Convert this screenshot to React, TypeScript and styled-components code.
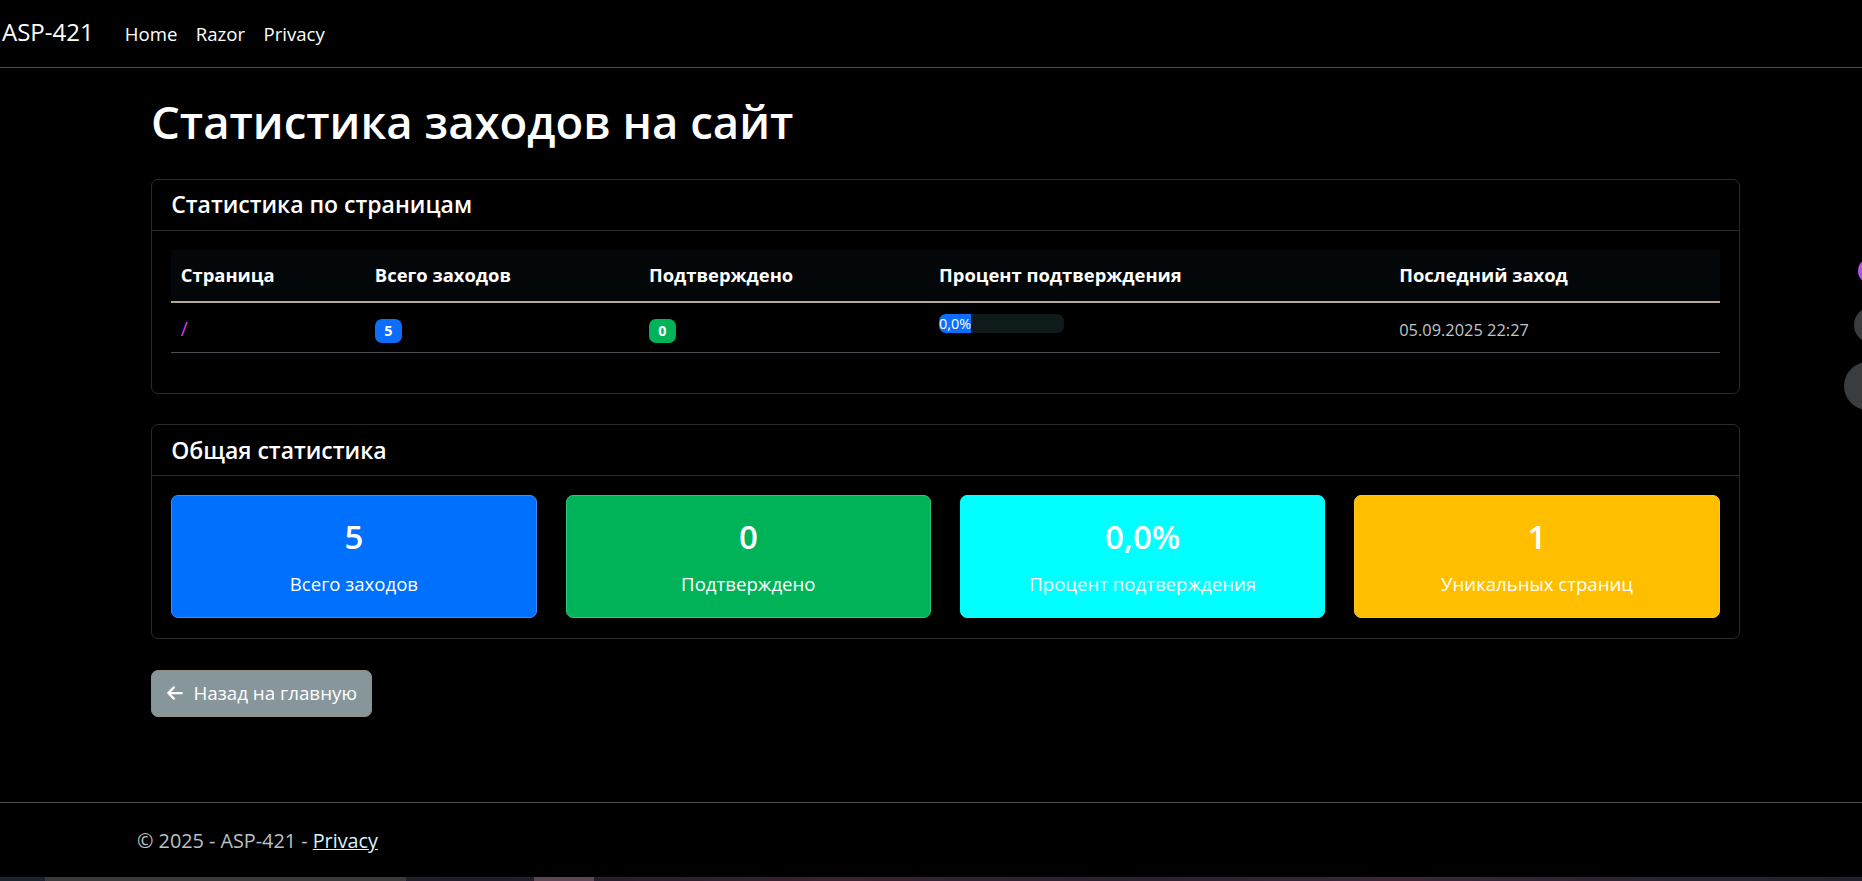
import styled, { createGlobalStyle } from 'styled-components';

const GlobalStyle = createGlobalStyle`
	html, body {
		margin: 0;
		padding: 0;
		background: #000;
	}
	body {
		color: #dee2e6;
		font-family: 'Open Sans', 'Noto Sans', sans-serif;
		font-size: 19.2px;
		line-height: 1.5;
	}
	* {
		box-sizing: border-box;
	}
`;

const Page = styled.div`
	min-height: 100vh;
	display: flex;
	flex-direction: column;
	position: relative;
	overflow: hidden;
`;

const Navbar = styled.nav`
	height: 68px;
	display: flex;
	align-items: center;
	padding: 0 0 1px 2px;
	border-bottom: 1px solid #4a5159;
`;

const Brand = styled.a`
	color: #fff;
	font-size: 24px;
	line-height: 1.2;
	text-decoration: none;
	margin-top: -2px;
`;

const NavList = styled.ul`
	display: flex;
	list-style: none;
	margin: 0 0 0 22px;
	padding: 0;
`;

const NavLink = styled.a`
	display: block;
	color: #fff;
	text-decoration: none;
	padding: 0 9.2px;
	font-size: 18.6px;
	line-height: 28.8px;
	margin-top: 2px;
`;

const Main = styled.main`
	flex: 1;
	padding-left: 151px;
	width: 1740px;
`;

const Title = styled.h1`
	margin: 25px 0 28px;
	font-size: 45.5px;
	font-weight: 600;
	line-height: 57.6px;
	color: #fff;
`;

const Card = styled.section<{ $gap?: number }>`
	border: 1px solid #2b2b2b;
	border-radius: 7px;
	margin-bottom: ${(p) => p.$gap ?? 0}px;
`;

const CardHeader = styled.header`
	padding: 10.8px 19.2px;
	border-bottom: 1px solid #2b2b2b;
`;

const CardTitle = styled.h5`
	margin: 0;
	font-size: 23px;
	font-weight: 600;
	line-height: 28.8px;
	color: #fff;
`;

const CardBody = styled.div`
	padding: 19.2px;
`;

const Table = styled.table`
	width: 100%;
	border-collapse: collapse;
	margin-bottom: 20.6px;
`;

const Th = styled.th<{ $w: number }>`
	width: ${(p) => p.$w}px;
	text-align: left;
	font-weight: 700;
	color: #fff;
	font-size: 18.4px;
	background: #03070a;
	padding: 11px 9.6px 11px;
	line-height: 28.8px;
	border-bottom: 2px solid #b5a897;
`;

const Td = styled.td`
	vertical-align: top;
	padding: 11.6px 9.6px 7.6px;
	line-height: 28.8px;
	border-bottom: 1px solid #4b4f53;
`;

const PageLink = styled.a`
	color: #cc40e8;
	text-decoration: none;
`;

const Badge = styled.span<{ $bg: string }>`
	display: inline-block;
	background: ${(p) => p.$bg};
	color: #fff;
	font-size: 14.4px;
	font-weight: 700;
	line-height: 1;
	padding: 5px 9.4px;
	border-radius: 7px;
`;

const Progress = styled.div`
	display: flex;
	width: 125px;
	height: 19.2px;
	background: #0f1a1b;
	border-radius: 7px;
	overflow: hidden;
	margin-top: -1px;
`;

const ProgressFill = styled.div`
	background: #0d6efd;
	color: #fff;
	font-size: 14.4px;
	line-height: 19.2px;
	white-space: nowrap;
	display: flex;
	align-items: center;
`;

const DateText = styled.span`
	color: #c1c5c9;
	font-size: 16.4px;
`;

const StatsRow = styled.div`
	display: grid;
	grid-template-columns: repeat(4, 1fr);
	gap: 28.8px;
`;

const StatBox = styled.div<{ $bg: string; $border: string }>`
	background: ${(p) => p.$bg};
	border: 1px solid ${(p) => p.$border};
	border-radius: 7px;
	padding: 21px 19.2px 19px;
	text-align: center;
	color: #fff;
`;

const StatNumber = styled.div`
	font-size: 33px;
	font-weight: 600;
	line-height: 40px;
	margin-bottom: 12px;
`;

const StatLabel = styled.div`
	font-size: 18.6px;
	line-height: 29px;
`;

const BackButton = styled.a`
	display: inline-flex;
	align-items: center;
	gap: 9px;
	margin-top: 31px;
	padding: 8.2px 14.4px;
	background: #86969b;
	border: 1px solid #958f83;
	border-radius: 7px;
	color: #fff;
	font-size: 18.8px;
	line-height: 28.8px;
	text-decoration: none;
	svg {
		flex-shrink: 0;
	}
`;

const Footer = styled.footer`
	height: 75px;
	border-top: 1px solid #4a4f54;
	display: flex;
	align-items: center;
	padding: 2px 0 0 137px;
	color: #bcc0c4;
	font-size: 19.8px;
	line-height: 28.8px;
	a {
		color: #d9f3ff;
		text-decoration: underline;
	}
`;

const Taskbar = styled.div`
	height: 4px;
	display: flex;
	background: linear-gradient(90deg, #1b2230 0%, #241c2a 30%, #3a2232 45%, #2a2030 60%, #3b2636 75%, #1f2130 100%);
`;

const TaskSeg = styled.div<{ $w: number; $bg: string }>`
	width: ${(p) => p.$w}px;
	background: ${(p) => p.$bg};
`;

const Bubble = styled.div<{ $top: number; $size: number; $left: number; $bg: string }>`
	position: absolute;
	top: ${(p) => p.$top}px;
	left: ${(p) => p.$left}px;
	width: ${(p) => p.$size}px;
	height: ${(p) => p.$size}px;
	border-radius: 50%;
	background: ${(p) => p.$bg};
`;

const ArrowLeft = () => (
	<svg width="18" height="18" viewBox="0 0 448 512" fill="#fff">
		<path d="M9.4 233.4c-12.5 12.5-12.5 32.8 0 45.3l160 160c12.5 12.5 32.8 12.5 45.3 0s12.5-32.8 0-45.3L109.2 288H416c17.7 0 32-14.3 32-32s-14.3-32-32-32H109.3L214.6 118.6c12.5-12.5 12.5-32.8 0-45.3s-32.8-12.5-45.3 0l-160 160z" />
	</svg>
);

const stats = [
	{ value: '5', label: 'Всего заходов', bg: '#0070ff', border: '#3d8dff' },
	{ value: '0', label: 'Подтверждено', bg: '#00b359', border: '#2ec47a' },
	{ value: '0,0%', label: 'Процент подтверждения', bg: '#00ffff', border: '#00ffff' },
	{ value: '1', label: 'Уникальных страниц', bg: '#ffbf00', border: '#ffc520' },
];

const App = () => {
	return (
		<Page>
			<GlobalStyle />
			<Navbar>
				<Brand href="#">ASP-421</Brand>
				<NavList>
					<li>
						<NavLink href="#">Home</NavLink>
					</li>
					<li>
						<NavLink href="#">Razor</NavLink>
					</li>
					<li>
						<NavLink href="#">Privacy</NavLink>
					</li>
				</NavList>
			</Navbar>

			<Main>
				<Title>Статистика заходов на сайт</Title>

				<Card $gap={30}>
					<CardHeader>
						<CardTitle>Статистика по страницам</CardTitle>
					</CardHeader>
					<CardBody>
						<Table>
							<thead>
								<tr>
									<Th $w={194}>Страница</Th>
									<Th $w={274}>Всего заходов</Th>
									<Th $w={290}>Подтверждено</Th>
									<Th $w={460}>Процент подтверждения</Th>
									<Th $w={330}>Последний заход</Th>
								</tr>
							</thead>
							<tbody>
								<tr>
									<Td>
										<PageLink href="#">/</PageLink>
									</Td>
									<Td>
										<Badge $bg="#0d6efd">5</Badge>
									</Td>
									<Td>
										<Badge $bg="#00b359">0</Badge>
									</Td>
									<Td>
										<Progress>
											<ProgressFill>0,0%</ProgressFill>
										</Progress>
									</Td>
									<Td>
										<DateText>05.09.2025 22:27</DateText>
									</Td>
								</tr>
							</tbody>
						</Table>
					</CardBody>
				</Card>

				<Card>
					<CardHeader>
						<CardTitle>Общая статистика</CardTitle>
					</CardHeader>
					<CardBody>
						<StatsRow>
							{stats.map((s) => (
								<StatBox key={s.label} $bg={s.bg} $border={s.border}>
									<StatNumber>{s.value}</StatNumber>
									<StatLabel>{s.label}</StatLabel>
								</StatBox>
							))}
						</StatsRow>
					</CardBody>
				</Card>

				<BackButton href="#">
					<ArrowLeft />
					Назад на главную
				</BackButton>
			</Main>

			<Footer>
				<span>
					© 2025 - ASP-421 - <a href="#">Privacy</a>
				</span>
			</Footer>
			<Taskbar>
				<TaskSeg $w={45} $bg="#1c2330" />
				<TaskSeg $w={361} $bg="#3a3a3c" />
				<TaskSeg $w={128} $bg="transparent" />
				<TaskSeg $w={60} $bg="#5c4656" />
			</Taskbar>

			<Bubble $top={258} $left={1858} $size={26} $bg="linear-gradient(135deg, #c35cf2, #7b43e6)" />
			<Bubble $top={307} $left={1854} $size={36} $bg="#3a3d3f" />
			<Bubble $top={362} $left={1844} $size={48} $bg="#3a3d3f" />
		</Page>
	);
};

export default App;
